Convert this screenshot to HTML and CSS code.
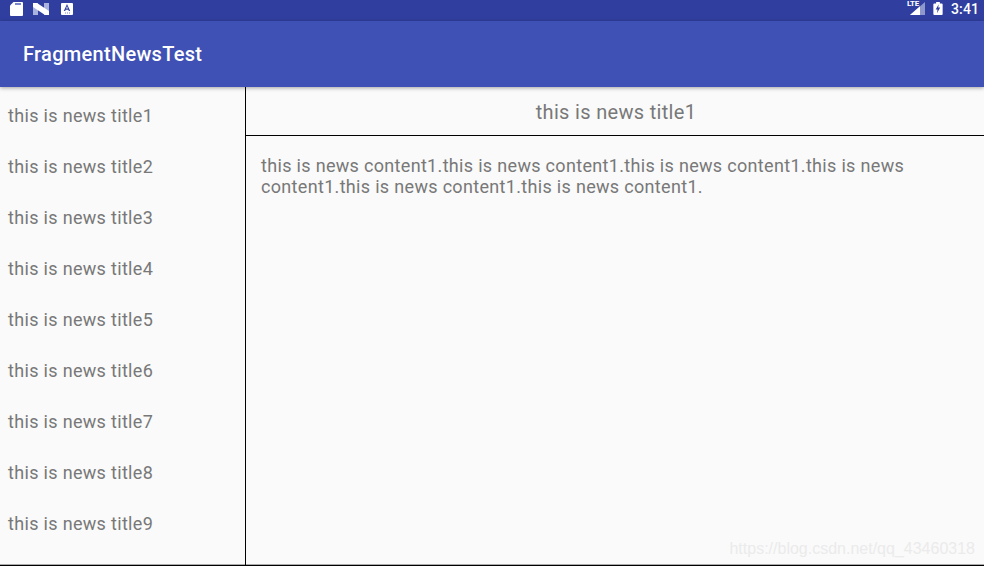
FILE: index.html
```html
<!DOCTYPE html>
<html lang="en">
<head>
<title>FragmentNewsTest</title>
<meta charset="utf-8">
<link rel="stylesheet" href="styles.css">
</head>
<body>
<div class="status">
	<div class="status-left">
		<svg class="sd-icon" width="13" height="14" viewBox="0 0 13 14"><path d="M3.500 0H12a1 1 0 0 1 1 1v12a1 1 0 0 1-1 1H1a1 1 0 0 1-1-1V3.500z" fill="#fff"/><path d="M5 1h6v2H5z" fill="#7c88cc"/></svg>
		<svg class="n-icon" width="16" height="12" viewBox="0 0 16 12"><path d="M0 0h5v12H0z" fill="#aab3dd"/><path d="M11 0h5v12h-5z" fill="#aab3dd"/><path d="M0 0h4l12 8v4h-4L0 4z" fill="#fff"/></svg>
		<svg class="a-icon" width="12" height="12" viewBox="0 0 12 12"><rect width="12" height="12" rx="1" fill="#fff"/><path d="M6 1 9.200 8H7.800l-.5-1.300H4.700L4.200 8H2.800zM5.100 5.600h1.800L6 3.300z" fill="#303f9f"/><path d="M4 9.500h1v1H4zM6 9.500h1v1H6zM8 9.500h1v1H8z" fill="#7c88cc"/></svg>
	</div>
	<div class="status-right">
		<div class="signal">
			<span class="lte">LTE</span>
			<svg width="15" height="13" viewBox="0 0 15 13"><path d="M15 0v13H0z" fill="#8e98cd"/><path d="M10 4.300V13H0z" fill="#fff"/></svg>
		</div>
		<svg class="battery" width="10" height="13" viewBox="0 0 10 14"><path d="M3 0h4v1.500h2a1 1 0 0 1 1 1V13a1 1 0 0 1-1 1H1a1 1 0 0 1-1-1V2.500a1 1 0 0 1 1-1h2z" fill="#fff"/><path d="M5.800 2.500 2.500 8h2l-.6 4 3.500-6H5.200z" fill="#303f9f"/></svg>
		<span class="clock">3:41</span>
	</div>
</div>
<div class="toolbar">FragmentNewsTest</div>
<div class="main">
	<ul class="titles">
		<li>this is news title1</li>
		<li>this is news title2</li>
		<li>this is news title3</li>
		<li>this is news title4</li>
		<li>this is news title5</li>
		<li>this is news title6</li>
		<li>this is news title7</li>
		<li>this is news title8</li>
		<li>this is news title9</li>
	</ul>
	<div class="detail">
		<div class="detail-title">this is news title1</div>
		<p class="detail-content">this is news content1.this is news content1.this is news content1.this is news content1.this is news content1.this is news content1.</p>
	</div>
</div>
<div class="watermark">https://blog.csdn.net/qq_43460318</div>
</body>
</html>
```
FILE: styles.css
```css
html, body {
	margin: 0;
	padding: 0;
	height: 566px;
	overflow: hidden;
}

body {
	position: relative;
	background-color: #fafafa;
	font-family: Roboto, "Liberation Sans", sans-serif;
	color: #787878;
}

.status {
	height: 21px;
	background-color: #303f9f;
	display: flex;
	justify-content: space-between;
	align-items: center;
	padding: 0 5px 4px 10px;
	box-sizing: border-box;
	color: #fff;
}

.status-left {
	display: flex;
	align-items: center;
	gap: 10px;
}

.a-icon {
	margin-left: 2px;
}

.status-right {
	display: flex;
	align-items: center;
}

.signal {
	position: relative;
	display: flex;
	width: 15px;
}

.lte {
	position: absolute;
	left: -3px;
	top: -2px;
	font-size: 8px;
	font-weight: 700;
	line-height: 8px;
	letter-spacing: -0.4px;
}

.battery {
	margin-left: 8px;
}

.clock {
	margin-left: 8px;
	margin-top: 1px;
	font-size: 14px;
	font-weight: 500;
	line-height: 16px;
	letter-spacing: 0.1px;
}

.toolbar {
	height: 66px;
	background-color: #3f51b5;
	color: #fff;
	font-size: 20px;
	font-weight: 500;
	line-height: 66px;
	letter-spacing: 0.3px;
	padding-left: 23px;
	box-shadow: 0 1px 4px rgba(0, 0, 0, 0.35);
	position: relative;
}

.main {
	display: flex;
	height: 478px;
	border-bottom: 1px solid #000;
}

.titles {
	width: 245px;
	margin: 0;
	padding: 0;
	list-style: none;
	border-right: 1px solid #000;
	flex-shrink: 0;
	box-shadow: inset 0 -1px #aaa;
}

.titles li {
	height: 51px;
	line-height: 51px;
	padding-left: 8px;
	font-size: 18px;
	letter-spacing: 0.32px;
	position: relative;
	top: 3px;
}

.detail {
	flex: 1;
	box-shadow: inset 0 -1px #aaa;
}

.detail-title {
	height: 48px;
	line-height: 50px;
	border-bottom: 1px solid #000;
	text-align: center;
	font-size: 20px;
	letter-spacing: 0.32px;
	padding-left: 2px;
}

.detail-content {
	margin: 0;
	padding: 19px 15px 0;
	font-size: 18px;
	line-height: 21px;
	letter-spacing: 0.32px;
}

.watermark {
	position: absolute;
	right: 9px;
	bottom: 8px;
	font-family: "Liberation Sans", sans-serif;
	font-size: 16px;
	color: #ebebeb;
}
```
